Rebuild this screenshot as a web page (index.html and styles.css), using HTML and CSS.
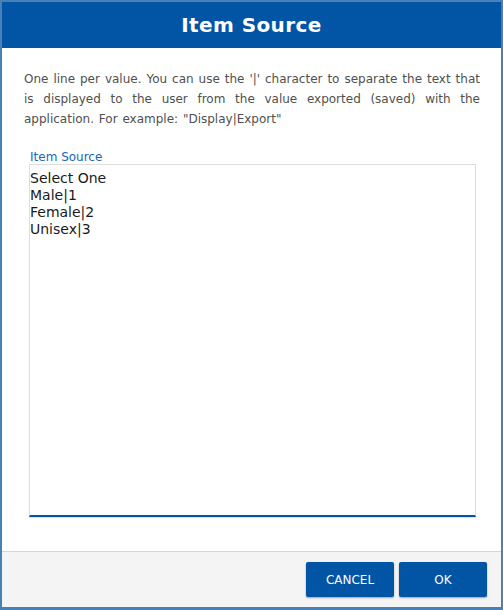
FILE: index.html
```html
<!DOCTYPE html>
<html>
<head>
<meta charset="utf-8">
<link rel="stylesheet" href="styles.css">
</head>
<body>
<div class="dialog">
  <div class="header"><h1 class="title">Item Source</h1></div>
  <div class="content">
    <p class="desc">One line per value. You can use the '|' character to separate the text that is displayed to the user from the value exported (saved) with the application. For example: "Display|Export"</p>
    <div class="field">
      <label class="label" for="src">Item Source</label>
      <textarea id="src" class="area">Select One
Male|1
Female|2
Unisex|3</textarea>
    </div>
  </div>
  <div class="footer">
    <button class="btn">CANCEL</button>
    <button class="btn">OK</button>
  </div>
</div>
</body>
</html>
```

FILE: styles.css
```css
html, body {
  margin: 0;
  padding: 0;
  background: #ffffff;
}
.dialog {
  width: 503px;
  height: 610px;
  box-sizing: border-box;
  border: 2px solid #4a80b8;
  border-bottom-width: 3px;
  display: flex;
  flex-direction: column;
  font-family: "DejaVu Sans", Verdana, sans-serif;
  background: #ffffff;
}
.header {
  height: 46px;
  background: #0254a5;
  display: flex;
  align-items: center;
  justify-content: center;
  flex-shrink: 0;
}
.title {
  margin: 0;
  color: #ffffff;
  font-size: 20px;
  font-weight: bold;
  letter-spacing: 0.4px;
}
.content {
  flex: 1;
  padding: 21px 21px 0 22px;
  display: flex;
  flex-direction: column;
}
.desc {
  margin: 0;
  font-size: 12px;
  word-spacing: 1px;
  line-height: 20px;
  color: #505050;
  text-align: justify;
}
.field {
  margin: 19px 0 0 5px;
  display: flex;
  flex-direction: column;
  width: 447px;
}
.label {
  font-size: 12px;
  line-height: 14px;
  color: #2066b8;
  padding: 2px 0 0 1px;
  letter-spacing: 0;
}
.area {
  box-sizing: border-box;
  width: 447px;
  height: 353px;
  margin: 0;
  padding: 5px 0 0 0;
  border: 1px solid #dddddd;
  border-bottom: 2px solid #0254a5;
  box-shadow: 0 1px 0 #e0e0e0;
  font-family: "DejaVu Sans", Verdana, sans-serif;
  font-size: 14px;
  line-height: 17px;
  color: #1a1a1a;
  resize: none;
  outline: none;
  overflow: hidden;
}
.footer {
  box-sizing: border-box;
  height: 56px;
  flex-shrink: 0;
  background: #f4f4f4;
  border-top: 1px solid #d6d6d6;
  display: flex;
  justify-content: flex-end;
  align-items: flex-start;
  gap: 5px;
  padding: 10px 14px 0 0;
}
.btn {
  width: 88px;
  height: 35px;
  padding: 0;
  background: #0254a5;
  color: #ffffff;
  border: none;
  border-radius: 2px;
  box-shadow: 0 1px 2px rgba(0,0,0,0.35);
  font-family: "DejaVu Sans", Verdana, sans-serif;
  font-size: 12px;
  cursor: pointer;
}
```
